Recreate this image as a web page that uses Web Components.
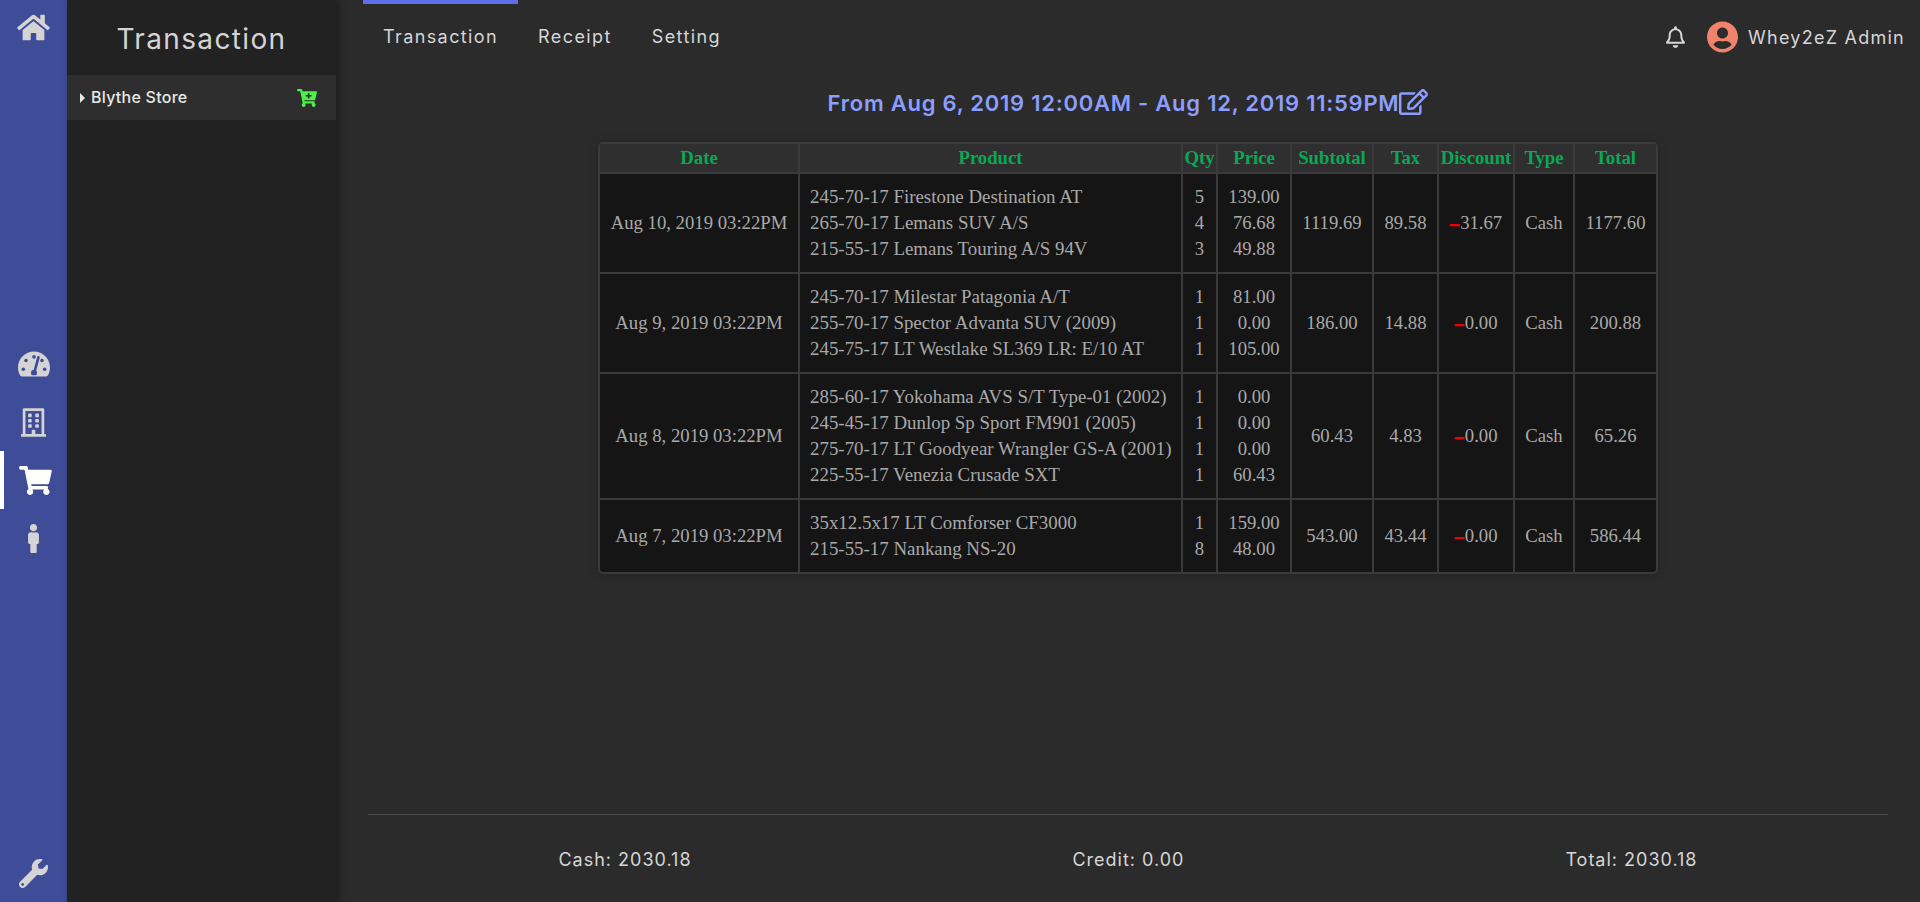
<!DOCTYPE html>
<html>
<head>
<meta charset="utf-8">
<title>Transaction</title>
<style>
  html, body { margin: 0; height: 100%; background: #2b2b2b; }
  body { font-family: Inter, "Noto Sans", sans-serif; color: #d6d6d6; overflow: hidden; }
  #app { display: flex; height: 902px; }
</style>
</head>
<body>
<div id="app">
  <app-rail></app-rail>
  <side-panel heading="Transaction">
    <store-row>Blythe Store</store-row>
  </side-panel>
  <main-view>
    <top-nav slot="nav" user="Whey2eZ Admin"></top-nav>
    <range-title>From Aug 6, 2019 12:00AM - Aug 12, 2019 11:59PM</range-title>
    <tx-table></tx-table>
    <tx-totals cash="2030.18" credit="0.00" total="2030.18"></tx-totals>
  </main-view>
</div>

<script>
// [viewBox width, viewBox height, path]
const ICONS = {
  home: [576, 512, 'M280.37 148.26L96 300.11V464a16 16 0 0 0 16 16l112.06-.29a16 16 0 0 0 15.92-16V368a16 16 0 0 1 16-16h64a16 16 0 0 1 16 16v95.64a16 16 0 0 0 16 16.05L464 480a16 16 0 0 0 16-16V300L295.67 148.26a12.19 12.19 0 0 0-15.3 0zM571.6 251.47L488 182.56V44.05a12 12 0 0 0-12-12h-56a12 12 0 0 0-12 12v72.61L318.47 43a48 48 0 0 0-61 0L4.34 251.47a12 12 0 0 0-1.6 16.9l25.5 31A12 12 0 0 0 45.15 301l235.22-193.74a12.19 12.19 0 0 1 15.3 0L530.9 301a12 12 0 0 0 16.9-1.6l25.5-31a12 12 0 0 0-1.7-16.93z'],
  cart: [576, 512, 'M528.12 301.319l47.273-208C578.806 78.301 567.391 64 551.99 64H159.208l-9.166-44.81C147.758 8.021 137.93 0 126.529 0H24C10.745 0 0 10.745 0 24v16c0 13.255 10.745 24 24 24h69.883l70.248 343.435C147.325 417.1 136 435.222 136 456c0 30.928 25.072 56 56 56s56-25.072 56-56c0-15.674-6.447-29.835-16.824-40h209.647C430.447 426.165 424 440.326 424 456c0 30.928 25.072 56 56 56s56-25.072 56-56c0-22.172-12.888-41.332-31.579-50.405l5.517-24.276c3.413-15.018-8.002-29.319-23.403-29.319H218.117l-6.545-32h293.145c11.206 0 20.92-7.754 23.403-18.681z'],
  cartPlus: [576, 512, 'M504.717 320H211.572l6.545 32h268.418c15.401 0 26.816 14.301 23.403 29.319l-5.517 24.276C523.112 414.668 536 433.828 536 456c0 31.202-25.519 56.444-56.824 55.994-29.823-.429-54.35-24.631-55.155-54.447-.44-16.287 6.085-31.049 16.803-41.548H231.176C241.553 426.165 248 440.326 248 456c0 31.813-26.528 57.431-58.67 55.938-28.54-1.325-51.751-24.385-53.251-52.917-1.158-22.034 10.436-41.455 28.051-51.586L93.883 64H24C10.745 64 0 53.255 0 40V24C0 10.745 10.745 0 24 0h102.529c11.401 0 21.228 8.021 23.513 19.19L159.208 64H551.99c15.401 0 26.816 14.301 23.403 29.319l-47.273 208C525.637 312.246 515.923 320 504.717 320zM408 168h-48v-40c0-8.837-7.163-16-16-16h-16c-8.837 0-16 7.163-16 16v40h-48c-8.837 0-16 7.163-16 16v16c0 8.837 7.163 16 16 16h48v40c0 8.837 7.163 16 16 16h16c8.837 0 16-7.163 16-16v-40h48c8.837 0 16-7.163 16-16v-16c0-8.837-7.163-16-16-16z'],
  wrench: [512, 512, 'M507.73 109.1c-2.24-9.03-13.54-12.09-20.12-5.51l-74.36 74.36-67.88-11.31-11.31-67.88 74.36-74.36c6.62-6.62 3.43-17.9-5.66-20.16-47.38-11.74-99.55.91-136.58 37.93-39.64 39.64-50.55 97.1-34.05 147.2L18.74 402.76c-24.99 24.99-24.99 65.51 0 90.5 24.99 24.99 65.51 24.99 90.5 0l213.21-213.21c50.12 16.71 107.47 5.68 147.37-34.22 37.07-37.07 49.7-89.32 37.91-136.73zM64 472c-13.25 0-24-10.75-24-24 0-13.26 10.75-24 24-24s24 10.74 24 24c0 13.25-10.75 24-24 24z'],
  edit: [576, 512, 'M402.3 344.9l32-32c5-5 13.7-1.5 13.7 5.7V464c0 26.5-21.5 48-48 48H48c-26.5 0-48-21.5-48-48V112c0-26.5 21.5-48 48-48h273.5c7.1 0 10.7 8.6 5.7 13.7l-32 32c-1.5 1.5-3.5 2.3-5.7 2.3H48v352h352V350.5c0-2.1.8-4.1 2.3-5.6zm156.6-201.8L296.3 405.7l-90.4 10c-26.2 2.9-48.5-19.2-45.6-45.6l10-90.4L432.9 17.1c22.9-22.9 59.9-22.9 82.7 0l43.2 43.2c22.9 22.9 22.9 60 .1 82.8zM460.1 174L402 115.9 216.2 301.8l-7.3 65.3 65.3-7.3L460.1 174zm64.8-79.7l-43.2-43.2c-4.1-4.1-10.8-4.1-14.8 0L436 82l58.1 58.1 30.9-30.9c4-4.2 4-10.8-.1-14.9z'],
  male: [192, 512, 'M96 0c35.346 0 64 28.654 64 64s-28.654 64-64 64-64-28.654-64-64S60.654 0 96 0m48 144h-11.36c-22.711 10.443-49.59 10.894-73.28 0H48c-26.51 0-48 21.49-48 48v136c0 13.255 10.745 24 24 24h16v136c0 13.255 10.745 24 24 24h64c13.255 0 24-10.745 24-24V352h16c13.255 0 24-10.745 24-24V192c0-26.51-21.49-48-48-48z'],
  building: [448, 512, 'M128 148v-40c0-6.6 5.4-12 12-12h40c6.6 0 12 5.4 12 12v40c0 6.6-5.4 12-12 12h-40c-6.6 0-12-5.4-12-12zm140 12h40c6.6 0 12-5.4 12-12v-40c0-6.6-5.4-12-12-12h-40c-6.6 0-12 5.4-12 12v40c0 6.6 5.4 12 12 12zm-128 96h40c6.6 0 12-5.4 12-12v-40c0-6.6-5.4-12-12-12h-40c-6.6 0-12 5.4-12 12v40c0 6.6 5.4 12 12 12zm128 0h40c6.6 0 12-5.4 12-12v-40c0-6.6-5.4-12-12-12h-40c-6.6 0-12 5.4-12 12v40c0 6.6 5.4 12 12 12zm-76 84v-40c0-6.6-5.4-12-12-12h-40c-6.6 0-12 5.4-12 12v40c0 6.6 5.4 12 12 12h40c6.6 0 12-5.4 12-12zm76 12h40c6.6 0 12-5.4 12-12v-40c0-6.6-5.4-12-12-12h-40c-6.6 0-12 5.4-12 12v40c0 6.6 5.4 12 12 12zm180 124v36H0v-36c0-6.6 5.4-12 12-12h19.5V24c0-13.3 10.7-24 24-24h337c13.3 0 24 10.7 24 24v440H436c6.6 0 12 5.4 12 12zM79.5 463H192v-67c0-6.6 5.4-12 12-12h40c6.6 0 12 5.4 12 12v67h112.5V49L80 48l-.5 415z'],
  bell: [448, 512, 'M439.39 362.29c-19.32-20.76-55.47-51.99-55.47-154.29 0-77.7-54.48-139.9-127.94-155.16V32c0-17.67-14.32-32-31.98-32s-31.98 14.33-31.98 32v20.84C118.56 68.1 64.08 130.3 64.08 208c0 102.3-36.15 133.53-55.47 154.29-6 6.45-8.66 14.16-8.61 21.71.11 16.4 12.98 32 32.1 32h383.8c19.12 0 32-15.6 32.1-32 .05-7.55-2.61-15.27-8.61-21.71zM67.53 368c21.22-27.97 44.42-74.33 44.53-159.42 0-.2-.06-.38-.06-.58 0-61.86 50.14-112 112-112s112 50.14 112 112c0 .2-.06.38-.06.58.11 85.1 23.31 131.46 44.53 159.42H67.53zM224 512c35.32 0 63.97-28.65 63.97-64H160.03c0 35.35 28.65 64 63.97 64z'],
  user: [496, 512, 'M248 8C111 8 0 119 0 256s111 248 248 248 248-111 248-248S385 8 248 8zm0 96c48.6 0 88 39.4 88 88s-39.4 88-88 88-88-39.4-88-88 39.4-88 88-88zm0 344c-58.7 0-111.3-26.6-146.5-68.2 18.8-35.4 55.6-59.8 98.5-59.8 2.4 0 4.8.4 7.1 1.1 13 4.2 26.6 6.9 40.9 6.9 14.3 0 28-2.7 40.9-6.9 2.3-.7 4.7-1.1 7.1-1.1 42.9 0 79.7 24.4 98.5 59.8C359.3 421.4 306.7 448 248 448z']
};

function svgIcon(name, width, color) {
  const [w, h, d] = ICONS[name];
  return `<svg width="${width}" height="${Math.round(width * h / w)}" viewBox="0 0 ${w} ${h}" fill="${color}" style="display:block"><path d="${d}"/></svg>`;
}

// dome with dots and a needle, the holes take the rail colour
const GAUGE = `<svg width="32" height="26" viewBox="0 32 576 448" style="display:block">
  <path fill="#d4d4d4" d="M288 32C128.94 32 0 160.94 0 320c0 52.8 14.25 102.26 39.06 144.8 5.61 9.62 16.3 15.2 27.44 15.2h443c11.14 0 21.83-5.58 27.44-15.2C561.75 422.26 576 372.8 576 320c0-159.06-128.94-288-288-288z"/>
  <g fill="#3f4c97">
    <circle cx="96" cy="352" r="32"/><circle cx="144" cy="192" r="32"/><circle cx="288" cy="128" r="32"/>
    <circle cx="432" cy="192" r="32"/><circle cx="480" cy="352" r="32"/>
    <path d="M232 416c0-29.44 22.28-53.44 50.81-56.45l61.33-230.08c3.43-12.81 16.64-20.43 29.39-16.97 12.8 3.4 20.4 16.6 17 29.39l-61.33 230.08C338.27 391.5 344 404.32 344 416c0 17.1-7.56 32.29-19.29 43.09h-73.42C239.56 448.29 232 433.1 232 416z"/>
  </g>
</svg>`;

class AppRail extends HTMLElement {
  connectedCallback() {
    const item = (svg, cls) => `<a class="item ${cls || ''}">${svg}</a>`;
    const grey = '#d4d4d4';
    this.attachShadow({mode: "open"}).innerHTML = `
      <style>
        :host { display: flex; flex-direction: column; justify-content: space-between; flex: 0 0 67px; width: 67px; background: #3f4c97; }
        .item { display: flex; align-items: center; justify-content: center; height: 58px; box-sizing: border-box; position: relative; }
        .item.active { border-left: 4px solid #fff; }
        .item.top { padding-bottom: 4px; }
      </style>
      <div>${item(svgIcon('home', 33, grey), 'top')}</div>
      <div>
        ${item(GAUGE)}
        ${item(svgIcon('building', 25, grey))}
        ${item(svgIcon('cart', 33, '#ffffff'), 'active')}
        ${item(svgIcon('male', 11, grey))}
      </div>
      <div>${item(svgIcon('wrench', 29, grey))}</div>`;
  }
}

class SidePanel extends HTMLElement {
  connectedCallback() {
    this.attachShadow({mode: "open"}).innerHTML = `
      <style>
        :host { display: block; flex: 0 0 269px; width: 269px; background: #222222; box-shadow: 3px 0 8px rgba(0,0,0,.35); position: relative; z-index: 1; }
        h1 { margin: 0; height: 75px; padding-top: 2px; box-sizing: border-box; display: flex; align-items: center; justify-content: center; font-size: 28px; font-weight: 400; letter-spacing: 1.35px; color: #d4d4d4; }
      </style>
      <h1>${this.getAttribute('heading')}</h1>
      <slot></slot>`;
  }
}

class StoreRow extends HTMLElement {
  connectedCallback() {
    this.attachShadow({mode: "open"}).innerHTML = `
      <style>
        :host { display: flex; align-items: center; height: 45px; background: #2e2e2e; padding: 0 19px 0 13px; font-size: 16px; font-weight: 500; letter-spacing: .25px; color: #e8e8e8; }
        .caret { width: 0; height: 0; border-left: 5px solid #e8e8e8; border-top: 5px solid transparent; border-bottom: 5px solid transparent; margin-right: 6px; }
        .name { flex: 1; position: relative; top: -1px; }
      </style>
      <span class="caret"></span>
      <span class="name"><slot></slot></span>
      ${svgIcon('cartPlus', 20, '#4bf04b')}`;
  }
}

class MainView extends HTMLElement {
  connectedCallback() {
    this.attachShadow({mode: "open"}).innerHTML = `
      <style>
        :host { display: flex; flex-direction: column; flex: 1; min-width: 0; height: 902px; }
        .body { flex: 1; display: flex; flex-direction: column; padding: 0 32px; min-height: 0; }
      </style>
      <slot name="nav"></slot>
      <div class="body"><slot></slot></div>`;
  }
}

class TopNav extends HTMLElement {
  connectedCallback() {
    const tabs = ['Transaction', 'Receipt', 'Setting'];
    this.attachShadow({mode: "open"}).innerHTML = `
      <style>
        :host { display: flex; align-items: center; height: 74px; padding: 0 15px 0 27px; font-size: 18px; letter-spacing: 1.4px; color: #d6d6d6; }
        .tabs { display: flex; flex: 1; height: 100%; }
        .tab { padding: 0 20px 6px; display: flex; align-items: center; border-top: 4px solid transparent; box-sizing: border-box; }
        .tab.on { border-top-color: #5e6ee6; }
        .user { display: flex; align-items: center; }
        .bell { margin-right: 22px; }
        .avatar { margin-right: 10px; }
      </style>
      <div class="tabs">${tabs.map((t, i) => `<a class="tab ${i === 0 ? 'on' : ''}">${t}</a>`).join('')}</div>
      <div class="user">
        <span class="bell">${svgIcon('bell', 19, '#d6d6d6')}</span>
        <span class="avatar">${svgIcon('user', 31, '#ef836c')}</span>
        <span style="letter-spacing:1.25px">${this.getAttribute('user')}</span>
      </div>`;
  }
}

class RangeTitle extends HTMLElement {
  connectedCallback() {
    this.attachShadow({mode: "open"}).innerHTML = `
      <style>
        :host { display: flex; align-items: center; justify-content: center; height: 58px; margin-bottom: 10px; font-size: 22px; font-weight: 600; letter-spacing: .75px; color: #8c9eff; }
        svg { margin-top: -3px; }
      </style>
      <slot></slot>${svgIcon('edit', 29, '#8c9eff')}`;
  }
}

const ROWS = [
  { date: 'Aug 10, 2019 03:22PM', items: [
      ['245-70-17 Firestone Destination AT', 5, '139.00'],
      ['265-70-17 Lemans SUV A/S', 4, '76.68'],
      ['215-55-17 Lemans Touring A/S 94V', 3, '49.88']],
    subtotal: '1119.69', tax: '89.58', discount: '31.67', type: 'Cash', total: '1177.60' },
  { date: 'Aug 9, 2019 03:22PM', items: [
      ['245-70-17 Milestar Patagonia A/T', 1, '81.00'],
      ['255-70-17 Spector Advanta SUV (2009)', 1, '0.00'],
      ['245-75-17 LT Westlake SL369 LR: E/10 AT', 1, '105.00']],
    subtotal: '186.00', tax: '14.88', discount: '0.00', type: 'Cash', total: '200.88' },
  { date: 'Aug 8, 2019 03:22PM', items: [
      ['285-60-17 Yokohama AVS S/T Type-01 (2002)', 1, '0.00'],
      ['245-45-17 Dunlop Sp Sport FM901 (2005)', 1, '0.00'],
      ['275-70-17 LT Goodyear Wrangler GS-A (2001)', 1, '0.00'],
      ['225-55-17 Venezia Crusade SXT', 1, '60.43']],
    subtotal: '60.43', tax: '4.83', discount: '0.00', type: 'Cash', total: '65.26' },
  { date: 'Aug 7, 2019 03:22PM', items: [
      ['35x12.5x17 LT Comforser CF3000', 1, '159.00'],
      ['215-55-17 Nankang NS-20', 8, '48.00']],
    subtotal: '543.00', tax: '43.44', discount: '0.00', type: 'Cash', total: '586.44' }
];

class TxTable extends HTMLElement {
  connectedCallback() {
    const widths = [200, 383, 35, 74, 82, 65, 76, 60, 81];
    const heads = ['Date', 'Product', 'Qty', 'Price', 'Subtotal', 'Tax', 'Discount', 'Type', 'Total'];
    const lines = (row, i) => row.items.map(it => `<div>${it[i]}</div>`).join('');
    const body = ROWS.map(r => `
      <tr>
        <td>${r.date}</td>
        <td class="left">${lines(r, 0)}</td>
        <td>${lines(r, 1)}</td>
        <td>${lines(r, 2)}</td>
        <td>${r.subtotal}</td>
        <td>${r.tax}</td>
        <td><span class="minus">–</span>${r.discount}</td>
        <td>${r.type}</td>
        <td>${r.total}</td>
      </tr>`).join('');
    this.attachShadow({mode: "open"}).innerHTML = `
      <style>
        :host { display: block; width: 1060px; margin: 0 auto; font-family: "Liberation Serif", serif; font-size: 18.72px; line-height: 26px; }
        .wrap { border: 2px solid #3a3a3a; border-radius: 5px; box-shadow: 0 0 10px rgba(0,0,0,.2); overflow: hidden; }
        table { border-collapse: separate; border-spacing: 0; table-layout: fixed; width: 1056px; }
        th, td { text-align: center; padding: 0; border-right: 2px solid #3a3a3a; border-bottom: 2px solid #3a3a3a; white-space: nowrap; }
        th:last-child, td:last-child { border-right: 0; }
        tr:last-child td { border-bottom: 0; }
        th { height: 28px; background: #2f2f2f; color: #0aa854; font-weight: 700; line-height: 20px; }
        td { padding: 10px 0; background: #151515; color: #a9a9a9; }
        td.left { text-align: left; padding-left: 10px; font-size: 18.9px; }
        .minus { color: #f00000; font-weight: 700; margin-right: 1px; text-shadow: 0 .6px 0 #f00000; }
      </style>
      <div class="wrap">
        <table>
          <colgroup>${widths.map(w => `<col style="width:${w}px">`).join('')}</colgroup>
          <thead><tr>${heads.map(h => `<th>${h}</th>`).join('')}</tr></thead>
          <tbody>${body}</tbody>
        </table>
      </div>`;
  }
}

class TxTotals extends HTMLElement {
  connectedCallback() {
    const a = n => this.getAttribute(n);
    this.attachShadow({mode: "open"}).innerHTML = `
      <style>
        :host { display: flex; justify-content: space-around; align-items: center; margin-top: auto; height: 88px; box-sizing: border-box; padding-top: 1px; border-top: 1px solid #4a4a4a; font-size: 18px; letter-spacing: 1px; color: #d6d6d6; }
      </style>
      <span>Cash: ${a('cash')}</span>
      <span>Credit: ${a('credit')}</span>
      <span>Total: ${a('total')}</span>`;
  }
}

customElements.define('app-rail', AppRail);
customElements.define('side-panel', SidePanel);
customElements.define('store-row', StoreRow);
customElements.define('main-view', MainView);
customElements.define('top-nav', TopNav);
customElements.define('range-title', RangeTitle);
customElements.define('tx-table', TxTable);
customElements.define('tx-totals', TxTotals);
</script>
</body>
</html>
